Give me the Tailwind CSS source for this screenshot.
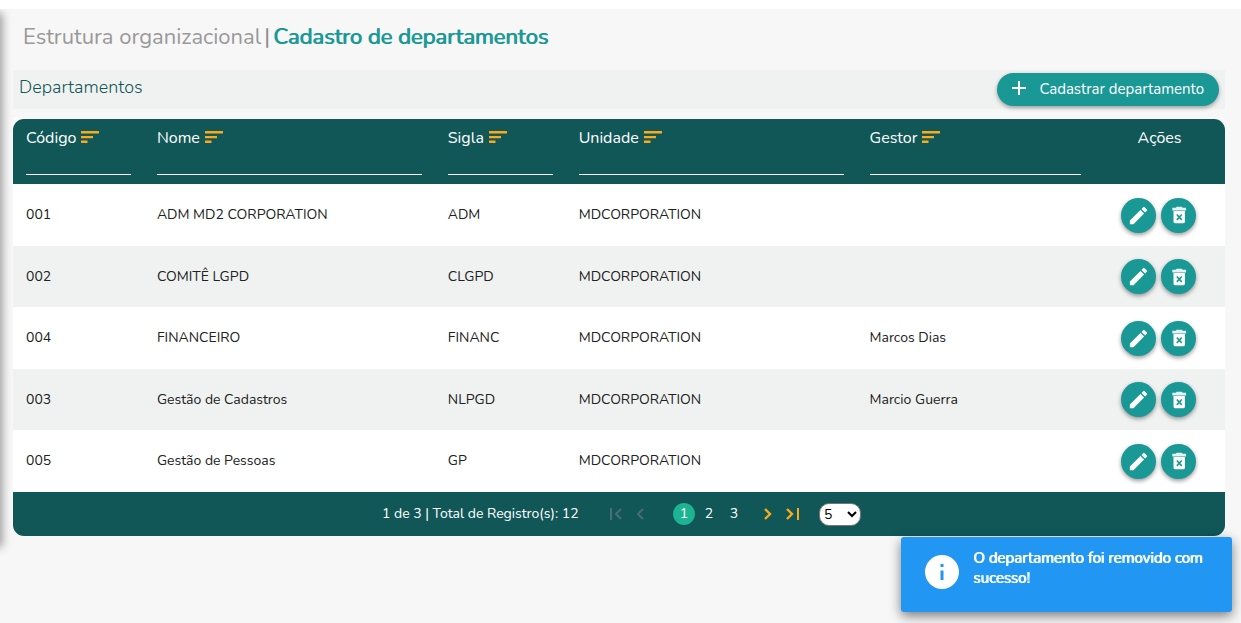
<!DOCTYPE html>
<html lang="pt-BR">
<head>
<meta charset="utf-8">
<meta name="viewport" content="width=device-width, initial-scale=1">
<title>Cadastro de departamentos</title>
<script src="https://cdn.jsdelivr.net/npm/@tailwindcss/browser@4"></script>
</head>
<body class="relative min-h-screen overflow-x-hidden border-t-[9px] border-white bg-[#f7f7f7] font-[Nunito,Lato,sans-serif] text-[#212121]">

<svg class="hidden" aria-hidden="true">
  <symbol id="sort" viewBox="0 0 18 12"><path fill="currentColor" d="M0 0h18v2.600H0zM0 5h12v2.200H0zM0 9.600h6.500V12H0z"/></symbol>
  <symbol id="edit" viewBox="0 0 24 24"><path fill="currentColor" d="M3 17.250V21h3.750L17.810 9.940l-3.750-3.750L3 17.250zM20.710 7.040a1 1 0 0 0 0-1.410l-2.340-2.340a1 1 0 0 0-1.410 0l-1.830 1.830 3.750 3.750 1.830-1.830z"/></symbol>
  <symbol id="trash" viewBox="0 0 24 24"><path fill="currentColor" fill-rule="evenodd" d="M6 7.500h12.500v11.500a2 2 0 0 1-2 2H8a2 2 0 0 1-2-2zM9 12.100 11.100 14.400 9 16.700 10.200 17.900 12.300 15.700 14.400 17.900 15.600 16.700 13.500 14.400 15.600 12.100 14.400 10.900 12.300 13.100 10.200 10.900z"/><path fill="currentColor" d="M16 4l-1-1H9.500l-1 1H4.700v3h15V4z" opacity=".88"/></symbol>
</svg>

<div class="absolute -left-5 top-1.5 h-[530px] w-5 shadow-[0_0_10px_2px_rgba(0,0,0,0.4)]" aria-hidden="true"></div>

<main class="pr-4 pl-[13px]">
  <header class="flex h-[61px] items-center gap-[3px] pb-1 pl-2.5 text-[22px]">
    <span class="text-[#999999]">Estrutura organizacional</span>
    <span class="text-[#8a8a8a]">|</span>
    <h1 class="font-normal text-[#1a9896] [text-shadow:1px_0_0_currentColor]">Cadastro de departamentos</h1>
  </header>

  <section class="flex h-[39px] items-center justify-between bg-[#f0f2f1] pr-1.5 pl-1.5">
    <h2 class="pb-1.5 text-lg font-light text-[#115757]">Departamentos</h2>
    <button type="button" class="flex h-[33px] items-center rounded-full bg-[#1a9896] px-[15px] text-[15px] text-white shadow-[0_2px_4px_rgba(0,0,0,0.35)]">
      <svg class="mr-[13px] mb-1 size-[14px]" viewBox="0 0 14 14" aria-hidden="true"><path fill="currentColor" d="M6 0h2v6h6v2H8v6H6V8H0V6h6z"/></svg>
      Cadastrar departamento
    </button>
  </section>

  <div class="mt-[9px] border-t border-white">
    <table class="w-full table-fixed border-collapse text-left text-sm">
      <colgroup><col class="w-[10.8%]"><col class="w-[24%]"><col class="w-[10.8%]"><col class="w-[24%]"><col class="w-[19.6%]"><col class="w-[10.8%]"></colgroup>
      <thead class="text-base text-white">
        <tr class="h-[65px] align-top">
          <th class="rounded-tl-[11px] bg-[#115757] px-[13px] pt-[7px] font-normal">
            <div class="flex items-center gap-[5px]"><label for="f1">Código</label><button type="button" aria-label="Ordenar por código" class="pb-0.5 text-[#fca91c]"><svg class="h-3 w-[18px]"><use href="#sort"/></svg></button></div>
            <input id="f1" type="text" class="block h-[25px] w-full border-b border-white bg-transparent text-sm outline-none">
          </th>
          <th class="bg-[#115757] px-[13px] pt-[7px] font-normal">
            <div class="flex items-center gap-[5px]"><label for="f2">Nome</label><button type="button" aria-label="Ordenar por nome" class="pb-0.5 text-[#fca91c]"><svg class="h-3 w-[18px]"><use href="#sort"/></svg></button></div>
            <input id="f2" type="text" class="block h-[25px] w-full border-b border-white bg-transparent text-sm outline-none">
          </th>
          <th class="bg-[#115757] px-[13px] pt-[7px] font-normal">
            <div class="flex items-center gap-[5px]"><label for="f3">Sigla</label><button type="button" aria-label="Ordenar por sigla" class="pb-0.5 text-[#fca91c]"><svg class="h-3 w-[18px]"><use href="#sort"/></svg></button></div>
            <input id="f3" type="text" class="block h-[25px] w-full border-b border-white bg-transparent text-sm outline-none">
          </th>
          <th class="bg-[#115757] px-[13px] pt-[7px] font-normal">
            <div class="flex items-center gap-[5px]"><label for="f4">Unidade</label><button type="button" aria-label="Ordenar por unidade" class="pb-0.5 text-[#fca91c]"><svg class="h-3 w-[18px]"><use href="#sort"/></svg></button></div>
            <input id="f4" type="text" class="block h-[25px] w-full border-b border-white bg-transparent text-sm outline-none">
          </th>
          <th class="bg-[#115757] px-[13px] pt-[7px] font-normal">
            <div class="flex items-center gap-[5px]"><label for="f5">Gestor</label><button type="button" aria-label="Ordenar por gestor" class="pb-0.5 text-[#fca91c]"><svg class="h-3 w-[18px]"><use href="#sort"/></svg></button></div>
            <input id="f5" type="text" class="block h-[25px] w-full border-b border-white bg-transparent text-sm outline-none">
          </th>
          <th class="rounded-tr-[11px] bg-[#115757] pt-[7px] text-center font-normal">Ações</th>
        </tr>
      </thead>
      <tbody id="rows"></tbody>
    </table>

    <nav aria-label="Paginação" class="flex h-11 items-center rounded-b-[11px] bg-[#115757] pl-[369px] text-sm text-white">
      <span class="w-[228px]">1 de 3 | Total de Registro(s): 12</span>
      <button type="button" disabled aria-label="Primeira página" class="mr-[14px] text-[#4d6c78]"><svg class="h-3 w-3" viewBox="0 0 12 12" fill="none" stroke="currentColor" stroke-width="2"><path d="M1 0v12M11 1 6 6l5 5"/></svg></button>
      <button type="button" disabled aria-label="Página anterior" class="mr-[29px] text-[#4d6c78]"><svg class="h-3 w-2" viewBox="0 0 8 12" fill="none" stroke="currentColor" stroke-width="2"><path d="M7 1 2 6l5 5"/></svg></button>
      <button type="button" aria-current="page" class="size-[22px] rounded-full bg-[#1db393]">1</button>
      <button type="button" class="ml-[3px] size-[22px]">2</button>
      <button type="button" class="ml-[3px] size-[22px]">3</button>
      <button type="button" aria-label="Próxima página" class="mr-[14px] ml-[19px] text-[#fca91c]"><svg class="h-3 w-2" viewBox="0 0 8 12" fill="none" stroke="currentColor" stroke-width="2.4"><path d="m1 1 5 5-5 5"/></svg></button>
      <button type="button" aria-label="Última página" class="mr-[20px] text-[#fca91c]"><svg class="h-3 w-[13px]" viewBox="0 0 13 12" fill="none" stroke="currentColor" stroke-width="2"><path stroke-width="2.4" d="m1 1 5 5-5 5"/><path d="M12 0v12"/></svg></button>
      <select aria-label="Registros por página" class="h-[23px] w-[42px] rounded-[10px] border border-[#767676] bg-white text-sm text-black"><option>5</option><option>10</option><option>20</option></select>
    </nav>
  </div>
</main>

<div role="status" class="fixed right-[9px] bottom-[11px] flex h-[75px] w-[331px] rounded-[3px] bg-[#2196f3] pt-[11px] pr-4 pl-6 text-[15px] leading-5 text-white shadow-[0_4px_12px_rgba(0,0,0,0.5)] [text-shadow:1px_0_0_currentColor]">
  <svg class="mt-[7px] mr-[14px] size-[34px] shrink-0" viewBox="0 0 34 34" aria-hidden="true"><circle cx="17" cy="17" r="17" fill="#fff"/><path fill="#2196f3" d="M15.500 9h3v3h-3zM15.500 15.500h3V25h-3z"/></svg>
  <p>O departamento foi removido com sucesso!</p>
</div>

<script>
const departments = [
  ["001", "ADM MD2 CORPORATION", "ADM", "MDCORPORATION", ""],
  ["002", "COMITÊ LGPD", "CLGPD", "MDCORPORATION", ""],
  ["004", "FINANCEIRO", "FINANC", "MDCORPORATION", "Marcos Dias"],
  ["003", "Gestão de Cadastros", "NLPGD", "MDCORPORATION", "Marcio Guerra"],
  ["005", "Gestão de Pessoas", "GP", "MDCORPORATION", ""]
];
document.getElementById("rows").innerHTML = departments.map(d => `
  <tr class="odd:h-[62px] odd:bg-white even:h-[61px] even:bg-[#f0f2f1]">
    ${d.map(v => `<td class="px-[13px]">${v}</td>`).join("")}
    <td class="pr-0.5"><div class="flex justify-center gap-[5px]">
      <button type="button" aria-label="Editar ${d[1]}" class="flex size-[35px] items-center justify-center rounded-full bg-[#1a9896] text-white shadow-[0_2px_4px_rgba(0,0,0,0.4)]"><svg class="size-[23px]"><use href="#edit"/></svg></button>
      <button type="button" aria-label="Remover ${d[1]}" class="flex size-[35px] items-center justify-center rounded-full bg-[#1a9896] text-white shadow-[0_2px_4px_rgba(0,0,0,0.4)]"><svg class="size-[22px]"><use href="#trash"/></svg></button>
    </div></td>
  </tr>`).join("");
</script>
</body>
</html>
